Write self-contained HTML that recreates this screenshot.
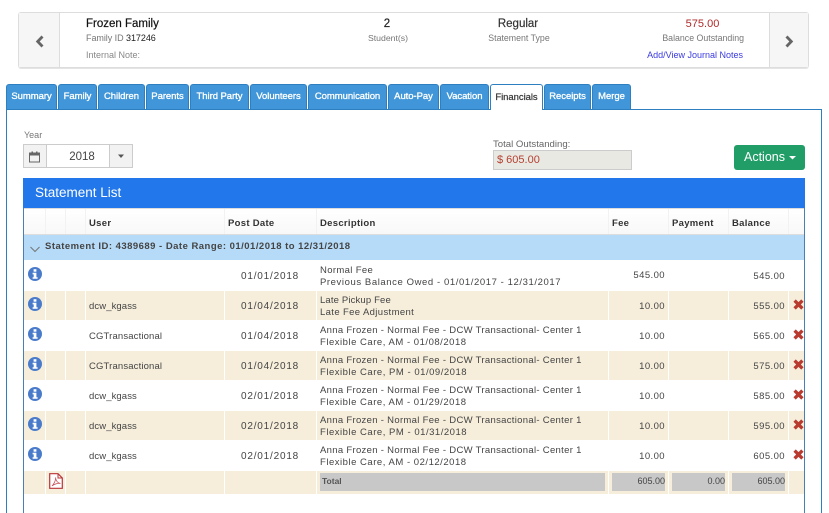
<!DOCTYPE html>
<html><head><meta charset="utf-8"><style>
html,body{margin:0;padding:0;background:#fff;width:829px;height:513px;overflow:hidden}
#w{position:relative;width:829px;height:513px;overflow:hidden;font-family:"Liberation Sans",sans-serif;color:#444}
.a,.l,.r,.d,.an,.fl,.u,.cg{position:absolute;white-space:nowrap}
.tab{position:absolute;top:84px;height:25px;background:#4096d8;border:1px solid #2e7fc0;border-bottom:0;border-radius:3px 3px 0 0;box-sizing:border-box;color:#fff;font-size:9.5px;-webkit-text-stroke:.3px #fff;letter-spacing:-.05px;line-height:23px;text-align:center}
.tan{position:absolute;background:#f6eedb}
.sep{position:absolute;width:1px;background:#fff}
.hs{position:absolute;top:209px;width:1px;height:25px;background:#f2f2f2}
.l,.r,.d,.an,.fl,.u,.cg{font-size:9.5px;color:#444;line-height:12px}
.l{letter-spacing:.35px}
.r{letter-spacing:.42px;text-align:right}
.d{font-size:10px;letter-spacing:.8px;left:241px}
.an{letter-spacing:.31px;left:320px}
.fl{letter-spacing:.52px;left:320px}
.u{letter-spacing:.1px;left:89px}
.cg{letter-spacing:.15px;left:89px}
.h{position:absolute;top:218px;font-size:9.5px;font-weight:bold;letter-spacing:.3px;color:#333;line-height:12px}
.g{position:absolute;background:#c8c8c8}
.st{-webkit-text-stroke:.2px}
</style></head><body><div id="w">
<svg width="0" height="0" style="position:absolute"><defs>
<symbol id="i" viewBox="0 0 14 14"><circle cx="7" cy="7" r="7" fill="#4a7bcb"/><rect x="5.6" y="2.2" width="2.8" height="2.5" fill="#fff"/><path d="M4.6 5.8H8.4V10.2H9.6V11.8H4.6V10.2H5.7V7.4H4.6Z" fill="#fff"/></symbol>
<symbol id="x" viewBox="0 0 11 11"><path d="M1.6 1.6L9.4 9.4M9.4 1.6L1.6 9.4" fill="none" stroke="#b93a2e" stroke-width="3.3"/></symbol>
</defs></svg>

<div class="a" style="left:18px;top:12px;width:791px;height:56px;box-sizing:border-box;border:1px solid #ddd;border-radius:3px;box-shadow:0 1px 0 #e4e4e4"></div>
<div class="a" style="left:19px;top:13px;width:40px;height:54px;background:#f6f6f6;border-right:1px solid #ddd"></div>
<div class="a" style="left:769px;top:13px;width:38px;height:54px;background:#f6f6f6;border-left:1px solid #ddd"></div>
<svg class="a" style="left:35px;top:35px" width="10" height="13"><path d="M7.5 1.5L2.7 6.5 7.5 11.5" fill="none" stroke="#666" stroke-width="2.8"/></svg>
<svg class="a" style="left:784px;top:35px" width="10" height="13"><path d="M2.5 1.5L7.3 6.5 2.5 11.5" fill="none" stroke="#666" stroke-width="2.8"/></svg>

<div class="a st" style="left:86px;top:18px;font-size:11.5px;color:#111;line-height:13px">Frozen Family</div>
<div class="a" style="left:86px;top:32px;font-size:9px;letter-spacing:-.05px;color:#777;line-height:12px">Family ID <span style="color:#222">317246</span></div>
<div class="a" style="left:86px;top:49px;font-size:9px;color:#888;line-height:12px">Internal Note:</div>
<div class="a st" style="left:367px;width:40px;text-align:center;top:18px;font-size:11.5px;color:#222;line-height:13px">2</div>
<div class="a" style="left:358px;width:60px;text-align:center;top:32px;font-size:8.7px;color:#777;line-height:12px">Student(s)</div>
<div class="a st" style="left:488px;width:60px;text-align:center;top:18px;font-size:11.5px;color:#333;line-height:13px">Regular</div>
<div class="a" style="left:479px;width:80px;text-align:center;top:32px;font-size:8.8px;color:#777;line-height:12px">Statement Type</div>
<div class="a" style="left:660px;width:85px;text-align:center;top:18px;font-size:11px;color:#b02a2a;line-height:13px">575.00</div>
<div class="a" style="left:644px;width:100px;text-align:right;top:32px;font-size:8.8px;color:#777;line-height:12px">Balance Outstanding</div>
<div class="a" style="left:627px;width:116px;text-align:right;top:49px;font-size:9px;color:#3a3ae0;line-height:12px">Add/View Journal Notes</div>

<div class="a" style="left:6px;top:109px;width:816px;height:410px;box-sizing:border-box;border:1px solid #2e7fc0"></div>
<div class="tab" style="left:6px;width:51px">Summary</div>
<div class="tab" style="left:58px;width:39px">Family</div>
<div class="tab" style="left:98px;width:47px">Children</div>
<div class="tab" style="left:146px;width:43px">Parents</div>
<div class="tab" style="left:190px;width:59px">Third Party</div>
<div class="tab" style="left:250px;width:57px">Volunteers</div>
<div class="tab" style="left:308px;width:79px">Communication</div>
<div class="tab" style="left:388px;width:51px">Auto-Pay</div>
<div class="tab" style="left:440px;width:49px">Vacation</div>
<div class="tab" style="left:490px;width:53px;height:26px;background:#fff;color:#333;-webkit-text-stroke:.2px #333;line-height:26px;z-index:2">Financials</div>
<div class="tab" style="left:544px;width:47px">Receipts</div>
<div class="tab" style="left:592px;width:39px">Merge</div>

<div class="a" style="left:24px;top:130px;font-size:9px;color:#777;line-height:11px">Year</div>
<div class="a" style="left:23px;top:144px;width:110px;height:24px;box-sizing:border-box;border:1px solid #ccc;background:#fff"></div>
<div class="a" style="left:24px;top:145px;width:22px;height:22px;background:#f2f2f2;border-right:1px solid #ccc"></div>
<div class="a" style="left:109px;top:145px;width:23px;height:22px;box-sizing:border-box;background:#f2f2f2;border-left:1px solid #ccc"></div>
<svg class="a" style="left:29px;top:151px" width="12" height="12"><rect x=".5" y="2" width="10" height="9" fill="none" stroke="#666"/><rect x=".5" y="2" width="10" height="2.5" fill="#666"/><rect x="2.5" y=".5" width="1.5" height="2" fill="#666"/><rect x="7" y=".5" width="1.5" height="2" fill="#666"/></svg>
<div class="a" style="left:51px;width:62px;top:150px;text-align:center;font-size:11.5px;color:#444;line-height:14px">2018</div>
<svg class="a" style="left:117px;top:154px" width="8" height="5"><path d="M1 .5H7L4 4Z" fill="#555"/></svg>

<div class="a" style="left:493px;top:139px;font-size:9.6px;color:#666;line-height:11px">Total Outstanding:</div>
<div class="a" style="left:493px;top:150px;width:139px;height:20px;box-sizing:border-box;border:1px solid #ccc;background:#e9e9e4;color:#b5402f;font-size:11px;line-height:18px;padding-left:3px">$ 605.00</div>
<div class="a" style="left:734px;top:145px;width:71px;height:25px;background:#219e67;border-radius:3px;color:#fff;font-size:12.5px;line-height:24px;padding-left:10px;box-sizing:border-box">Actions</div>
<svg class="a" style="left:789px;top:156px" width="7" height="4"><path d="M0 0H7L3.5 3.5Z" fill="#fff"/></svg>

<div class="a" style="left:23px;top:178px;width:782px;height:30px;background:#2277ea;color:#fff;font-size:13.5px;line-height:29px;padding-left:12px;box-sizing:border-box">Statement List</div>
<div class="a" style="left:23px;top:208px;width:1px;height:305px;background:#4a7fb5"></div>
<div class="a" style="left:804px;top:208px;width:1px;height:305px;background:#4a7fb5"></div>
<div class="a" style="left:24px;top:208px;width:780px;height:27px;background:linear-gradient(#fff,#f8f8f8);border-bottom:1px solid #ddd;box-sizing:border-box;border-top:1px solid #ddd"></div>
<div class="hs" style="left:45px"></div>
<div class="hs" style="left:65px"></div>
<div class="hs" style="left:85px"></div>
<div class="hs" style="left:224px"></div>
<div class="hs" style="left:316px"></div>
<div class="hs" style="left:608px"></div>
<div class="hs" style="left:668px"></div>
<div class="hs" style="left:728px"></div>
<div class="hs" style="left:788px"></div>
<div class="h" style="left:89px">User</div>
<div class="h" style="left:228px">Post Date</div>
<div class="h" style="left:320px">Description</div>
<div class="h" style="left:612px">Fee</div>
<div class="h" style="left:672px">Payment</div>
<div class="h" style="left:732px">Balance</div>

<div class="a" style="left:24px;top:235px;width:780px;height:25px;background:#b6dbf8"></div>
<svg class="a" style="left:30px;top:246px" width="10" height="7"><path d="M.5 1L5 5.5 9.5 1" fill="none" stroke="#777" stroke-width="1.1"/></svg>
<div class="a" style="left:45px;top:241px;font-size:9.5px;font-weight:bold;letter-spacing:.48px;color:#444;line-height:12px">Statement ID: 4389689 - Date Range: 01/01/2018 to 12/31/2018</div>

<div class="tan" style="left:24px;top:291px;width:780px;height:29px"></div>
<div class="tan" style="left:24px;top:351px;width:780px;height:29px"></div>
<div class="tan" style="left:24px;top:411px;width:780px;height:29px"></div>
<div class="tan" style="left:24px;top:471px;width:780px;height:23px"></div>
<div class="sep" style="left:45px;top:291px;height:203px"></div>
<div class="sep" style="left:65px;top:291px;height:203px"></div>
<div class="sep" style="left:85px;top:291px;height:203px"></div>
<div class="sep" style="left:224px;top:291px;height:203px"></div>
<div class="sep" style="left:316px;top:291px;height:203px"></div>
<div class="sep" style="left:608px;top:291px;height:203px"></div>
<div class="sep" style="left:668px;top:291px;height:203px"></div>
<div class="sep" style="left:728px;top:291px;height:203px"></div>
<div class="sep" style="left:788px;top:291px;height:203px"></div>

<svg class="a" style="left:28px;top:267px" width="14" height="14"><use href="#i"/></svg>
<svg class="a" style="left:28px;top:297px" width="14" height="14"><use href="#i"/></svg>
<svg class="a" style="left:28px;top:327px" width="14" height="14"><use href="#i"/></svg>
<svg class="a" style="left:28px;top:357px" width="14" height="14"><use href="#i"/></svg>
<svg class="a" style="left:28px;top:387px" width="14" height="14"><use href="#i"/></svg>
<svg class="a" style="left:28px;top:417px" width="14" height="14"><use href="#i"/></svg>
<svg class="a" style="left:28px;top:447px" width="14" height="14"><use href="#i"/></svg>

<svg class="a" style="left:793px;top:299px" width="11" height="11"><use href="#x"/></svg>
<svg class="a" style="left:793px;top:329px" width="11" height="11"><use href="#x"/></svg>
<svg class="a" style="left:793px;top:359px" width="11" height="11"><use href="#x"/></svg>
<svg class="a" style="left:793px;top:389px" width="11" height="11"><use href="#x"/></svg>
<svg class="a" style="left:793px;top:419px" width="11" height="11"><use href="#x"/></svg>
<svg class="a" style="left:793px;top:449px" width="11" height="11"><use href="#x"/></svg>

<div class="d" style="top:271px">01/01/2018</div>
<div class="l" style="left:320px;top:265px">Normal Fee</div>
<div class="l" style="left:320px;top:277px;letter-spacing:.59px">Previous Balance Owed - 01/01/2017 - 12/31/2017</div>
<div class="r" style="right:164px;top:270px">545.00</div>
<div class="r" style="right:44px;top:271px">545.00</div>

<div class="u" style="top:301px">dcw_kgass</div>
<div class="d" style="top:301px">01/04/2018</div>
<div class="l" style="left:320px;top:295px;letter-spacing:.15px">Late Pickup Fee</div>
<div class="l" style="left:320px;top:307px;letter-spacing:.37px">Late Fee Adjustment</div>
<div class="r" style="right:164px;top:301px">10.00</div>
<div class="r" style="right:44px;top:301px">555.00</div>

<div class="cg" style="top:331px">CGTransactional</div>
<div class="d" style="top:331px">01/04/2018</div>
<div class="an" style="top:325px">Anna Frozen - Normal Fee - DCW Transactional- Center 1</div>
<div class="fl" style="top:337px">Flexible Care, AM - 01/08/2018</div>
<div class="r" style="right:164px;top:331px">10.00</div>
<div class="r" style="right:44px;top:331px">565.00</div>

<div class="cg" style="top:361px">CGTransactional</div>
<div class="d" style="top:361px">01/04/2018</div>
<div class="an" style="top:355px">Anna Frozen - Normal Fee - DCW Transactional- Center 1</div>
<div class="fl" style="top:367px">Flexible Care, PM - 01/09/2018</div>
<div class="r" style="right:164px;top:361px">10.00</div>
<div class="r" style="right:44px;top:361px">575.00</div>

<div class="u" style="top:391px">dcw_kgass</div>
<div class="d" style="top:391px">02/01/2018</div>
<div class="an" style="top:385px">Anna Frozen - Normal Fee - DCW Transactional- Center 1</div>
<div class="fl" style="top:397px">Flexible Care, AM - 01/29/2018</div>
<div class="r" style="right:164px;top:391px">10.00</div>
<div class="r" style="right:44px;top:391px">585.00</div>

<div class="u" style="top:421px">dcw_kgass</div>
<div class="d" style="top:421px">02/01/2018</div>
<div class="an" style="top:415px">Anna Frozen - Normal Fee - DCW Transactional- Center 1</div>
<div class="fl" style="top:427px">Flexible Care, PM - 01/31/2018</div>
<div class="r" style="right:164px;top:421px">10.00</div>
<div class="r" style="right:44px;top:421px">595.00</div>

<div class="u" style="top:451px">dcw_kgass</div>
<div class="d" style="top:451px">02/01/2018</div>
<div class="an" style="top:445px">Anna Frozen - Normal Fee - DCW Transactional- Center 1</div>
<div class="fl" style="top:457px">Flexible Care, AM - 02/12/2018</div>
<div class="r" style="right:164px;top:451px">10.00</div>
<div class="r" style="right:44px;top:451px">605.00</div>

<svg class="a" style="left:49px;top:473px" width="14" height="16"><path d="M.7.7H9L13.3 5V15.3H.7Z" fill="#fff" stroke="#b9333a" stroke-width="1.2"/><path d="M9 .7V5H13.3" fill="none" stroke="#b9333a"/><path d="M3 13C5 11 7 7 6.5 4.5 7 8 9 10 11.5 10.5 9 10 5 11 3 13Z" fill="none" stroke="#c9535a" stroke-width=".8"/></svg>

<div class="g" style="left:320px;top:473px;width:285px;height:18px"></div>
<div class="g" style="left:612px;top:473px;width:53px;height:18px"></div>
<div class="g" style="left:672px;top:473px;width:53px;height:18px"></div>
<div class="g" style="left:732px;top:473px;width:53px;height:18px"></div>
<div class="a" style="left:322px;top:476px;font-size:8.5px;font-weight:bold;color:#555;line-height:11px">Total</div>
<div class="a" style="right:164px;top:476px;font-size:9px;color:#444;line-height:11px">605.00</div>
<div class="a" style="right:104px;top:476px;font-size:9px;color:#444;line-height:11px">0.00</div>
<div class="a" style="right:44px;top:476px;font-size:9px;color:#444;line-height:11px">605.00</div>
</div></body></html>
